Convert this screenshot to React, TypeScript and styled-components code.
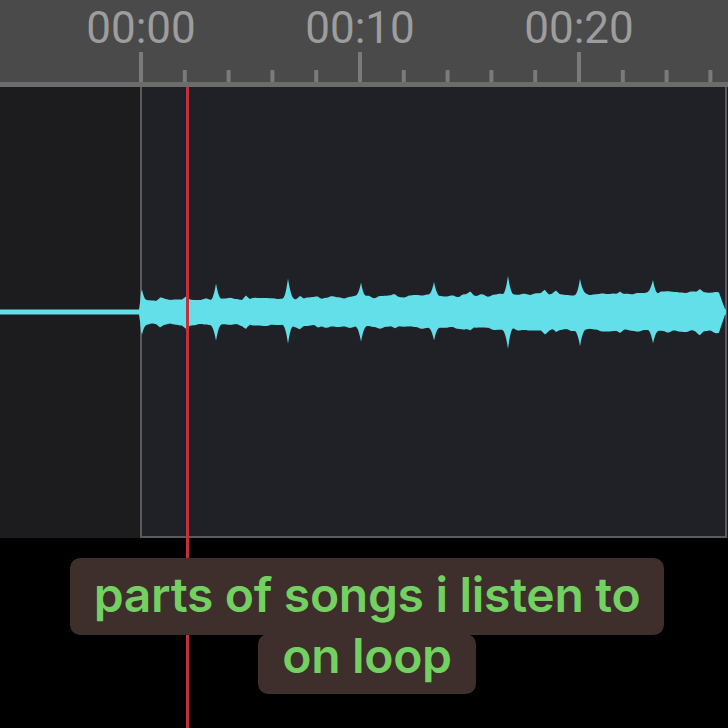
import React from "react";
import styled, { createGlobalStyle } from "styled-components";

const GlobalStyle = createGlobalStyle`
  html, body { margin: 0; padding: 0; background: #000; }
  body { width: 728px; height: 728px; overflow: hidden; }
`;

const Screen = styled.div`
  position: relative;
  width: 728px;
  height: 728px;
  display: flex;
  flex-direction: column;
  background: #000;
  overflow: hidden;
`;

const Ruler = styled.div`
  height: 82px;
  background: #4a4a4a;
  display: flex;
  flex-direction: column;
`;

const LabelRow = styled.div`
  display: flex;
  height: 50px;
  padding-left: 31.5px;
`;

const TimeLabel = styled.div`
  width: 219px;
  flex: none;
  text-align: center;
  font-family: Roboto, "Liberation Sans", sans-serif;
  font-size: 44px;
  line-height: 50px;
  padding-top: 3px;
  color: #9d9d9d;
`;

const TickStrip = styled.svg`
  display: block;
  width: 728px;
  height: 32px;
`;

const RulerBase = styled.div`
  height: 5px;
  background: #6c6c6c;
`;

const Track = styled.div`
  height: 451px;
  display: flex;
  background: #1c1c1e;
`;

const Gutter = styled.div`
  width: 140px;
  flex: none;
`;

const Clip = styled.div`
  width: 583px;
  flex: none;
  border: 2px solid #5b5b5f;
  border-top: none;
  background: #202126;
`;

const WaveLayer = styled.svg`
  position: absolute;
  left: 0;
  top: 87px;
  width: 728px;
  height: 451px;
`;

const Playhead = styled.div`
  position: absolute;
  left: 186px;
  top: 87px;
  bottom: 0;
  width: 3px;
  background: #c3303d;
`;

const Below = styled.div`
  flex: 1;
  display: flex;
  flex-direction: column;
  align-items: center;
  padding-top: 20px;
  padding-left: 6px;
  position: relative;
  z-index: 2;
`;

const CaptionLine = styled.div<{ $lh: number; $pt: number; $pb: number; $overlap?: number }>`
  display: inline-block;
  background: #3e2e2c;
  color: #72d160;
  font-family: Inter, "Open Sans", sans-serif;
  font-weight: 600;
  font-size: 48px;
  letter-spacing: -0.3px;
  border-radius: 10px;
  padding: ${(p) => p.$pt}px 24px ${(p) => p.$pb}px;
  margin-top: ${(p) => -(p.$overlap ?? 0)}px;
  line-height: ${(p) => p.$lh}px;
  white-space: nowrap;
`;

// ---- waveform geometry ----
function makeRand(seed: number) {
  let s = seed;
  return () => {
    s = (s * 16807) % 2147483647;
    return (s - 1) / 2147483646;
  };
}

const CY = 225;
const spikes: [number, number][] = [
  [141, 17],
  [216, 16],
  [288, 19],
  [361, 15],
  [434, 13],
  [508, 19],
  [580, 16],
  [653, 13],
];
const bumps: [number, number][] = [
  [160, 3],
  [186, 3],
  [246, 4],
  [300, 3],
  [318, 2],
  [395, 2],
  [470, 3],
  [545, 4],
  [556, 3],
  [620, 3],
  [700, 3],
];

function buildWave(): string {
  const r1 = makeRand(11);
  const r2 = makeRand(97);
  const n1: number[] = [];
  const n2: number[] = [];
  for (let i = 0; i < 140; i++) {
    n1.push((r1() - 0.5) * 3);
    n2.push((r2() - 0.5) * 3);
  }
  const noise = (arr: number[], x: number) => {
    const t = (x - 140) / 6;
    const i = Math.floor(t);
    const f = t - i;
    const a = arr[Math.max(0, i)] ?? 0;
    const b = arr[Math.max(0, i + 1)] ?? 0;
    return a + (b - a) * (0.5 - Math.cos(f * Math.PI) / 2);
  };
  const amp = (x: number, arr: number[]) => {
    let base = 12 + ((x - 140) / 585) * 8;
    base += noise(arr, x);
    for (const [c, h] of spikes) {
      const d = Math.abs(x - c);
      const w = 6;
      if (d < w) base += h * Math.pow(1 - d / w, 2.2);
    }
    for (const [c, h] of bumps) {
      const d = Math.abs(x - c);
      const w = 4;
      if (d < w) base += h * (1 - d / w);
    }
    if (x < 142) base *= Math.max(0.15, (x - 138.5) / 3.5);
    if (x > 719) base *= Math.max(0.1, (726 - x) / 7);
    return Math.max(2.5, base);
  };
  const top: string[] = [];
  const bot: string[] = [];
  for (let x = 139; x <= 726; x += 1) {
    top.push(`${x},${(CY - amp(x, n1)).toFixed(1)}`);
    bot.push(`${x},${(CY + amp(x, n2)).toFixed(1)}`);
  }
  bot.reverse();
  return `M${top.join(" L")} L${bot.join(" L")} Z`;
}

const WAVE_PATH = buildWave();

const TICKS = Array.from({ length: 14 }, (_, k) => ({
  x: 141 + k * 43.8,
  major: k % 5 === 0,
}));

export default function App() {
  return (
    <>
      <GlobalStyle />
      <Screen>
        <Ruler>
          <LabelRow>
            <TimeLabel>00:00</TimeLabel>
            <TimeLabel>00:10</TimeLabel>
            <TimeLabel>00:20</TimeLabel>
          </LabelRow>
          <TickStrip viewBox="0 0 728 32">
            {TICKS.map((t) => (
              <rect
                key={t.x}
                x={t.x - 2}
                y={t.major ? 2 : 20}
                width={4}
                height={t.major ? 30 : 12}
                fill="#7a7a7a"
              />
            ))}
          </TickStrip>
        </Ruler>
        <RulerBase />
        <Track>
          <Gutter />
          <Clip />
        </Track>
        <WaveLayer viewBox="0 0 728 451">
          <rect x={0} y={CY - 2.5} width={142} height={5} fill="#62dfe9" />
          <path d={WAVE_PATH} fill="#62dfe9" />
        </WaveLayer>
        <Playhead />
        <Below>
          <CaptionLine $lh={52} $pt={10.5} $pb={14.5}>
            parts of songs i listen to
          </CaptionLine>
          <CaptionLine $lh={42} $pt={1} $pb={17} $overlap={1}>
            on loop
          </CaptionLine>
        </Below>
      </Screen>
    </>
  );
}
